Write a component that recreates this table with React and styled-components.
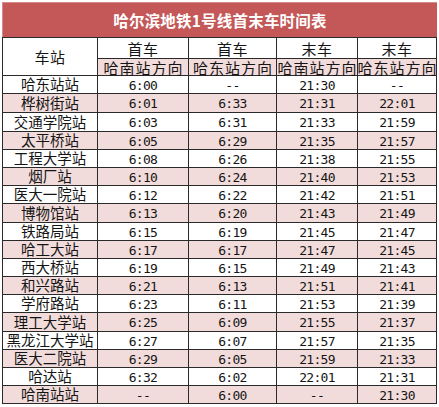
import React from 'react';
import styled, { createGlobalStyle } from 'styled-components';

const GlobalStyle = createGlobalStyle`
  html, body {
    margin: 0;
    padding: 0;
    background: #ffffff;
  }
  * {
    box-sizing: border-box;
  }
`;

const Page = styled.div`
  width: 439px;
  height: 407px;
  padding: 2px 0 0 2px;
  background: #ffffff;
  overflow: hidden;
`;

const TitleBar = styled.div`
  width: 435px;
  height: 35px;
  background: #c45757;
  border-top: 1px solid #d98a8a;
  border-left: 1px solid #d98a8a;
  display: flex;
  align-items: center;
  justify-content: center;
  color: #ffffff;
  font-family: "Noto Sans CJK SC", "Noto Sans", sans-serif;
  font-weight: 700;
  font-size: 15.5px;
  line-height: 1;
  letter-spacing: 0.2px;
  padding-top: 1px;
`;

// measured row heights (content, without the 1px line)
const ROWS = '20px 16px 17px 18px 18px 17px 17px 17px 17px 18px 17px 17px 17px 17px 17px 18px 17px 17px 17px 17px';

const Grid = styled.div`
  width: 435px;
  display: grid;
  grid-template-columns: 94px 90px 87px 80px 78px;
  grid-template-rows: ${ROWS};
  gap: 1px;
  padding: 1px;
  background: #2a2a2a;
`;

const Cell = styled.div`
  display: flex;
  align-items: center;
  justify-content: center;
  background: ${(p) => (p.$pink ? '#f2dcdb' : '#ffffff')};
  color: #151515;
  line-height: 1;
  white-space: nowrap;
  grid-row: ${(p) => p.$span || 'auto'};
`;

const Station = styled(Cell)`
  font-family: "Noto Sans CJK SC", "Noto Sans", sans-serif;
  font-size: 14.5px;
`;

const HeadText = styled(Cell)`
  font-family: "Noto Sans CJK SC", "Noto Sans", sans-serif;
  font-size: 15px;
  letter-spacing: ${(p) => (p.$wide ? '1px' : '0.5px')};
  padding-left: ${(p) => (p.$wide ? '1px' : '0')};
`;

const Time = styled(Cell)`
  font-family: "DejaVu Sans Mono", "Liberation Mono", monospace;
  font-size: 13px;
  letter-spacing: -0.7px;
  padding-top: 1px;
`;

const data = [
  ['哈东站站', '6:00', '--', '21:30', '--'],
  ['桦树街站', '6:01', '6:33', '21:31', '22:01'],
  ['交通学院站', '6:03', '6:31', '21:33', '21:59'],
  ['太平桥站', '6:05', '6:29', '21:35', '21:57'],
  ['工程大学站', '6:08', '6:26', '21:38', '21:55'],
  ['烟厂站', '6:10', '6:24', '21:40', '21:53'],
  ['医大一院站', '6:12', '6:22', '21:42', '21:51'],
  ['博物馆站', '6:13', '6:20', '21:43', '21:49'],
  ['铁路局站', '6:15', '6:19', '21:45', '21:47'],
  ['哈工大站', '6:17', '6:17', '21:47', '21:45'],
  ['西大桥站', '6:19', '6:15', '21:49', '21:43'],
  ['和兴路站', '6:21', '6:13', '21:51', '21:41'],
  ['学府路站', '6:23', '6:11', '21:53', '21:39'],
  ['理工大学站', '6:25', '6:09', '21:55', '21:37'],
  ['黑龙江大学站', '6:27', '6:07', '21:57', '21:35'],
  ['医大二院站', '6:29', '6:05', '21:59', '21:33'],
  ['哈达站', '6:32', '6:02', '22:01', '21:31'],
  ['哈南站站', '--', '6:00', '--', '21:30'],
];

export default function App() {
  return (
    <Page>
      <GlobalStyle />
      <TitleBar>哈尔滨地铁1号线首末车时间表</TitleBar>
      <Grid>
        <HeadText $span="span 2">车站</HeadText>
        <HeadText>首车</HeadText>
        <HeadText>首车</HeadText>
        <HeadText>末车</HeadText>
        <HeadText>末车</HeadText>
        <HeadText $pink $wide>哈南站方向</HeadText>
        <HeadText $pink $wide>哈东站方向</HeadText>
        <HeadText $pink $wide>哈南站方向</HeadText>
        <HeadText $pink $wide>哈东站方向</HeadText>
        {data.map((row, i) => {
          const pink = i % 2 === 1;
          return (
            <React.Fragment key={row[0]}>
              <Station $pink={pink}>{row[0]}</Station>
              {row.slice(1).map((t, j) => (
                <Time key={j} $pink={pink}>{t}</Time>
              ))}
            </React.Fragment>
          );
        })}
      </Grid>
    </Page>
  );
}
